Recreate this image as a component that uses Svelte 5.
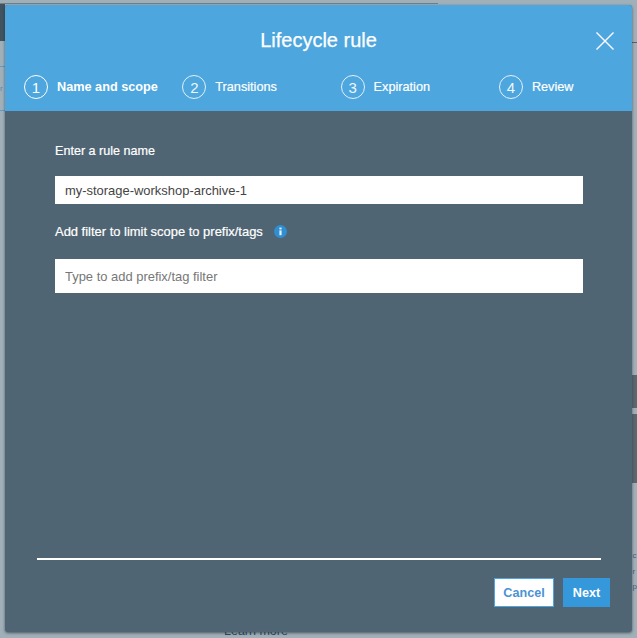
<script>
  const steps = [
    { n: 1, label: 'Name and scope', active: true },
    { n: 2, label: 'Transitions' },
    { n: 3, label: 'Expiration' },
    { n: 4, label: 'Review' }
  ];
</script>

<div class="page">
  <div class="backdrop" aria-hidden="true">
    <div class="top-line"></div>
    <div class="left-dark"></div>
    <div class="left-line a"></div>
    <div class="left-line b"></div>
    <div class="right-tick"></div>
    <div class="right-dark"></div>
    <div class="right-gap"></div>
    <span class="learn">Learn more</span>
    <span class="frag f1">r</span>
    <span class="frag f2">c</span>
    <span class="frag f3">r</span>
    <span class="frag f4">p</span>
  </div>
  <div class="modal">
    <header>
      <div class="title-row">
        <h1>Lifecycle rule</h1>
        <button class="close" aria-label="Close">
          <svg width="20" height="20" viewBox="0 0 20 20"><path d="M1.5 1.5 18.5 18.5M18.5 1.5 1.5 18.5" stroke="#fff" stroke-width="1.4" fill="none" /></svg>
        </button>
      </div>
      <ol class="steps">
        {#each steps as s}
          <li class:active={s.active}>
            <span class="num">{s.n}</span>
            <span class="lbl">{s.label}</span>
          </li>
        {/each}
      </ol>
    </header>
    <main>
      <label class="l1" for="rule">Enter a rule name</label>
      <input id="rule" class="i1" value="my-storage-workshop-archive-1" />
      <div class="l2">
        <label for="filter">Add filter to limit scope to prefix/tags</label>
        <svg class="info" width="13" height="13" viewBox="0 0 13 13">
          <circle cx="6.5" cy="6.5" r="6.5" fill="#2f8fd2" />
          <rect x="5.4" y="5.4" width="2.2" height="4.8" fill="#e8f2fa" />
          <rect x="5.4" y="2.6" width="2.2" height="1.8" fill="#e8f2fa" />
        </svg>
      </div>
      <input id="filter" class="i2" placeholder="Type to add prefix/tag filter" />
    </main>
    <footer>
      <div class="rule"></div>
      <div class="actions">
        <button class="cancel">Cancel</button>
        <button class="next">Next</button>
      </div>
    </footer>
  </div>
</div>

<style>
  :global(body) {
    margin: 0;
    background: #a0b0b9;
    font-family: "Liberation Sans", Arial, sans-serif;
  }
  .page {
    position: relative;
    width: 637px;
    height: 638px;
    overflow: hidden;
    box-sizing: border-box;
    padding: 5px 5px 6px 5px;
  }
  .backdrop div { position: absolute; }
  .top-line { left: 0; top: 3px; width: 438px; height: 1px; background: #6f808c; }
  .left-dark { left: 0; top: 4px; width: 5px; height: 37px; background: #40535f; }
  .left-line { left: 0; width: 5px; height: 1px; background: #5f9cc8; }
  .left-line.a { top: 66px; }
  .left-line.b { top: 110px; }
  .right-tick { left: 632px; top: 42px; width: 5px; height: 1px; background: #4f6270; }
  .right-dark { left: 632px; top: 375px; width: 5px; height: 108px; background: #5b6770; }
  .right-gap { left: 632px; top: 408px; width: 5px; height: 6px; background: #a0b0b9; }
  .learn {
    position: absolute;
    left: 224px;
    top: 624px;
    font-size: 12.5px;
    color: #2b4a63;
  }
  .frag {
    position: absolute;
    font-size: 8px;
    line-height: 15px;
    color: #3f5f7c;
  }
  .f1 { left: 0; top: 81px; color: #4d86b4; }
  .f2 { left: 632.5px; top: 548px; }
  .f3 { left: 632.5px; top: 564px; }
  .f4 { left: 632.5px; top: 579px; }
  .modal {
    position: relative;
    height: 627px;
    display: flex;
    flex-direction: column;
    background: #506573;
    border-radius: 3px;
    overflow: hidden;
    box-shadow: 0 1px 3px rgba(40, 50, 60, .7);
  }
  header {
    background: #4da6dd;
    height: 106px;
    flex: none;
    color: #fff;
  }
  .title-row {
    position: relative;
    height: 70px;
    display: flex;
    align-items: center;
    justify-content: center;
  }
  h1 {
    margin: 0;
    font-size: 20px;
    font-weight: 400;
    -webkit-text-stroke: .25px #fff;
  }
  .close {
    position: absolute;
    right: 17px;
    top: 26px;
    padding: 0;
    border: 0;
    background: none;
    line-height: 0;
  }
  .steps {
    list-style: none;
    margin: 0;
    padding: 0 0 0 19px;
    display: grid;
    grid-template-columns: repeat(4, 158.3px);
  }
  .steps li {
    display: flex;
    align-items: center;
    gap: 9px;
    height: 24px;
  }
  .num {
    box-sizing: border-box;
    width: 24px;
    height: 24px;
    border: 1px solid #e4f1fa;
    border-radius: 50%;
    display: flex;
    align-items: center;
    justify-content: center;
    font-size: 15px;
    font-weight: 400;
    color: #eef6fc;
  }
  .active .num { border: 1.5px solid #fff; color: #fff; }
  .lbl {
    font-size: 12.7px;
    -webkit-text-stroke: .2px #fff;
  }
  .active .lbl { font-weight: 700; -webkit-text-stroke: 0; }
  main {
    flex: 1;
    padding: 0 49px 0 50px;
    display: flex;
    flex-direction: column;
  }
  label { color: #fff; font-size: 12.95px; -webkit-text-stroke: .2px #fff; }
  .l1 { margin-top: 33px; line-height: 15px; font-size: 12.6px; }
  input {
    box-sizing: border-box;
    display: block;
    width: 528px;
    border: 0;
    background: #fff;
    font-family: inherit;
    font-size: 12.95px;
    color: #444;
    padding: 0 10px;
    outline: none;
    border-radius: 0;
  }
  input::placeholder { color: #777; opacity: 1; }
  .i1 { height: 28px; margin-top: 17px; }
  .l2 {
    margin-top: 20px;
    height: 15px;
    display: flex;
    align-items: center;
    gap: 11px;
  }
  .info { flex: none; }
  .i2 { height: 34px; margin-top: 20px; }
  footer {
    flex: none;
    height: 74px;
    padding: 0 31px 0 32px;
  }
  .rule { height: 2px; background: #fff; }
  .actions {
    margin-top: 18px;
    display: flex;
    justify-content: flex-end;
    gap: 9px;
    margin-right: -9px;
  }
  .actions button {
    height: 29px;
    box-sizing: border-box;
    font-family: inherit;
    font-size: 12.6px;
    font-weight: 700;
    padding: 0;
    border-radius: 0;
  }
  .cancel { width: 60px; background: #fff; color: #4a93d6; border: 1px solid #4da6dd; }
  .next { width: 47px; background: #3498db; color: #fff; border: 0; }
</style>
